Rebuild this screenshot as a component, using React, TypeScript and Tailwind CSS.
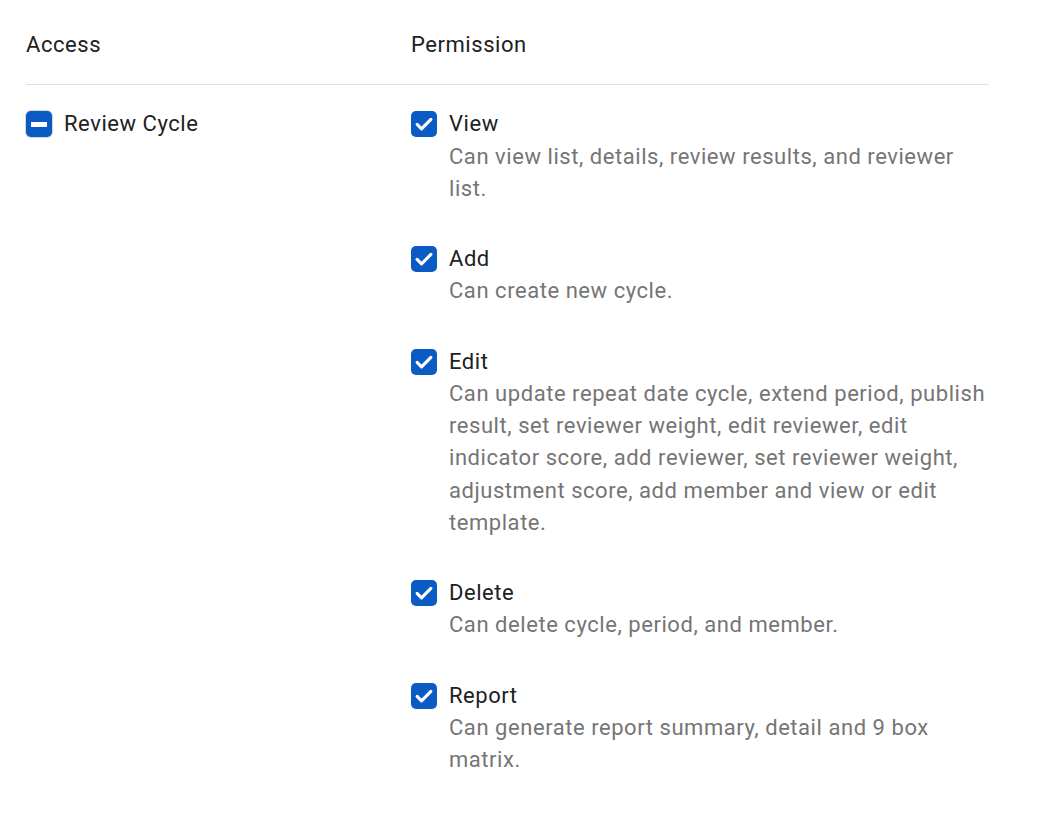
const PERMISSIONS = [
  { label: 'View', desc: 'Can view list, details, review results, and reviewer list.' },
  { label: 'Add', desc: 'Can create new cycle.' },
  {
    label: 'Edit',
    desc: 'Can update repeat date cycle, extend period, publish result, set reviewer weight, edit reviewer, edit indicator score, add reviewer, set reviewer weight, adjustment score, add member and view or edit template.',
  },
  { label: 'Delete', desc: 'Can delete cycle, period, and member.' },
  { label: 'Report', desc: 'Can generate report summary, detail and 9 box matrix.' },
];

function CheckBox() {
  return (
    <span className="flex h-[26px] w-[26px] shrink-0 items-center justify-center rounded-[5px] bg-[#0a5bc4]">
      <svg viewBox="0 0 24 24" className="h-[22px] w-[22px]" fill="none" stroke="white" strokeWidth="3.4" strokeLinecap="round" strokeLinejoin="round">
        <path d="M4.5 12.5l4.8 4.8L19.5 7" />
      </svg>
    </span>
  );
}

function Indeterminate() {
  return (
    <span className="flex h-[26px] w-[26px] shrink-0 items-center justify-center rounded-[5px] bg-[#0a5bc4] ring-1 ring-[#d6d6d6]">
      <span className="h-[5px] w-[16px] bg-white" />
    </span>
  );
}

export default function App() {
  return (
    <div className="min-h-screen bg-white font-['Roboto',sans-serif] text-[22px] leading-[32.25px] tracking-[0.55px]">
      <div className="ml-[26px] w-[963px]">
        <div className="flex border-b border-[#e0e0e0] pt-[29px] pb-[23px] text-[#212121]">
          <div className="w-[385px]">Access</div>
          <div>Permission</div>
        </div>
        <div className="flex pt-[23px]">
          <div className="flex w-[385px] items-center gap-[12px] self-start text-[#212121]">
            <Indeterminate />
            <span>Review Cycle</span>
          </div>
          <div className="flex flex-1 flex-col gap-[38px]">
            {PERMISSIONS.map(p => (
              <div key={p.label} className="flex gap-[12px]">
                <div className="flex h-[32px] items-center">
                  <CheckBox />
                </div>
                <div>
                  <div className="text-[#212121]">{p.label}</div>
                  <div className="text-[#757575]">{p.desc}</div>
                </div>
              </div>
            ))}
          </div>
        </div>
      </div>
    </div>
  );
}
